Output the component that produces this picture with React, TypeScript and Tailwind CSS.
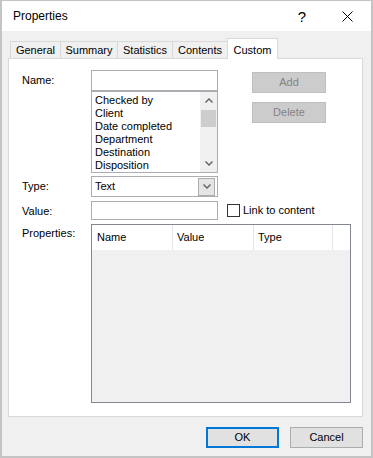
import React from "react";

const tabs = [
  { label: "General", w: "w-[50px]" },
  { label: "Summary", w: "w-[57px]" },
  { label: "Statistics", w: "w-[55px]" },
  { label: "Contents", w: "w-[55px]" },
];

const names = ["Checked by", "Client", "Date completed", "Department", "Destination", "Disposition"];

function Chevron({ up = false }: { up?: boolean }) {
  return (
    <svg width="8" height="5" viewBox="0 0 8 5">
      <polyline
        points={up ? "0.5,4.5 4,1 7.5,4.5" : "0.5,0.5 4,4 7.5,0.5"}
        fill="none"
        stroke="#606060"
        strokeWidth="1.4"
      />
    </svg>
  );
}

export default function App() {
  return (
    <div className="flex h-[458px] w-[373px] flex-col border-2 border-t border-[#c4c4c4] bg-[#f0f0f0] font-['Liberation_Sans',Arial,sans-serif] text-[11px] text-black">
      {/* title bar */}
      <div className="flex h-[30px] items-center bg-white pl-[11px] pr-[18px]">
        <span className="flex-1 text-[12px]">Properties</span>
        <span className="text-[15px] leading-none">?</span>
        <svg className="ml-[36px]" width="11" height="11" viewBox="0 0 11 11">
          <path d="M0.5 0.5 L10.5 10.5 M10.5 0.5 L0.5 10.5" stroke="#000" strokeWidth="1" />
        </svg>
      </div>

      <div className="flex flex-col pl-[6px] pt-[7px]">
        {/* tabs */}
        <div className="flex items-end pl-[2px]">
          {tabs.map((t) => (
            <div
              key={t.label}
              className={`${t.w} flex h-[17px] items-center justify-center border-l border-t border-[#d9d9d9] bg-[#f0f0f0]`}
            >
              {t.label}
            </div>
          ))}
          <div className="relative z-10 -mb-px flex h-[21px] w-[51px] items-start justify-center border-x border-t border-[#d9d9d9] bg-white pt-[3px]">
            Custom
          </div>
        </div>

        {/* panel */}
        <div className="flex h-[359px] w-[355px] flex-col border border-[#d9d9d9] bg-white pl-[13px] pt-[11px]">
          <div className="flex">
            <div className="flex h-[21px] w-[69px] items-center">Name:</div>
            <div className="flex w-[127px] flex-col">
              <div className="h-[21px] border border-[#abadb3] bg-white" />
              <div className="flex h-[82px] border border-[#abadb3] bg-white">
                <div className="flex-1 pl-[3px] pt-[2px] leading-[13px]">
                  {names.map((n) => (
                    <div key={n}>{n}</div>
                  ))}
                </div>
                <div className="flex w-[17px] flex-col bg-[#f0f0f0]">
                  <div className="flex h-[17px] items-center justify-center">
                    <Chevron up />
                  </div>
                  <div className="mx-px mt-px h-[17px] bg-[#cdcdcd]" />
                  <div className="flex-1" />
                  <div className="flex h-[17px] items-center justify-center">
                    <Chevron />
                  </div>
                </div>
              </div>
            </div>
            <div className="ml-[34px] flex flex-col gap-[9px] pt-[2px]">
              <div className="flex h-[21px] w-[74px] items-center justify-center border border-[#bfbfbf] bg-[#cccccc] text-[#838383]">
                Add
              </div>
              <div className="flex h-[21px] w-[74px] items-center justify-center border border-[#bfbfbf] bg-[#cccccc] text-[#838383]">
                Delete
              </div>
            </div>
          </div>

          <div className="mt-[3px] flex">
            <div className="flex h-[21px] w-[69px] items-center">Type:</div>
            <div className="flex h-[21px] w-[127px] items-center border border-[#abadb3] bg-white pl-[3px] pr-[2px]">
              <span className="flex-1">Text</span>
              <div className="flex h-[18px] w-[17px] items-center justify-center border border-[#acacac] bg-[#e5e5e5]">
                <Chevron />
              </div>
            </div>
          </div>

          <div className="mt-[4px] flex items-center">
            <div className="flex h-[19px] w-[69px] items-center pt-[2px]">Value:</div>
            <div className="h-[19px] w-[127px] border border-[#abadb3] bg-white" />
            <div className="ml-[9px] h-[13px] w-[13px] border border-[#333333] bg-white" />
            <span className="ml-[3px]">Link to content</span>
          </div>

          <div className="mt-[4px] flex">
            <div className="w-[69px] pt-[1px]">Properties:</div>
            <div className="flex h-[179px] w-[260px] flex-col border border-[#828790] bg-[#f0f0f0]">
              <div className="flex h-[25px] bg-white">
                <div className="flex w-[81px] items-center border-r border-[#e5e5e5] pl-[5px]">Name</div>
                <div className="flex w-[81px] items-center border-r border-[#e5e5e5] pl-[4px]">Value</div>
                <div className="flex w-[79px] items-center border-r border-[#e5e5e5] pl-[4px]">Type</div>
                <div className="flex-1" />
              </div>
            </div>
          </div>
        </div>

        {/* bottom buttons */}
        <div className="mt-[10px] flex w-[355px] justify-end gap-[11px]">
          <div className="flex h-[21px] w-[73px] items-center justify-center border-2 border-[#0078d7] bg-[#e1e1e1]">
            OK
          </div>
          <div className="flex h-[21px] w-[73px] items-center justify-center border border-[#adadad] bg-[#e1e1e1]">
            Cancel
          </div>
        </div>
      </div>
    </div>
  );
}
